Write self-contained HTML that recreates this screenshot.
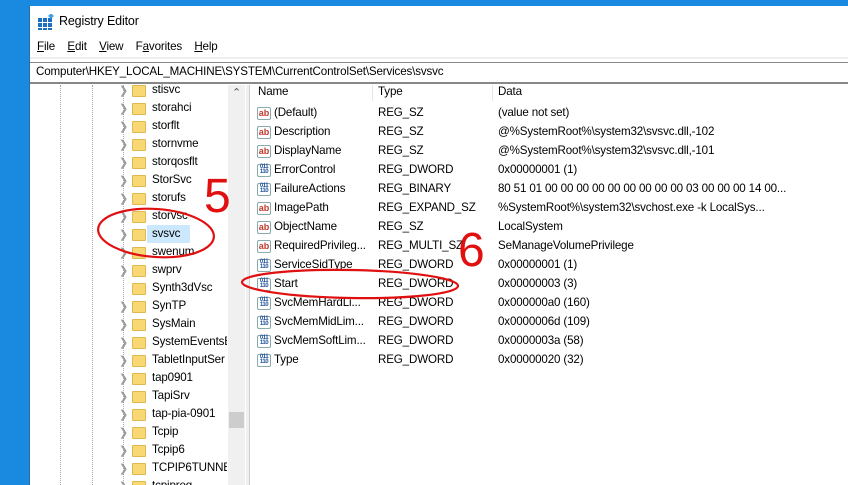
<!DOCTYPE html>
<html style="width:848px;height:485px;overflow:hidden"><head><style>
*{margin:0;padding:0;box-sizing:border-box}
body{width:848px;height:485px;overflow:hidden;background:#1a8ae0;font-family:"Liberation Sans",sans-serif;font-size:11.6px;letter-spacing:-0.15px;color:#000;position:relative}
.win{position:absolute;left:29px;top:6px;width:830px;height:479px;background:#fff;border-left:1px solid #2a6cb0;overflow:hidden}
.t{position:absolute;white-space:nowrap}
.fold{position:absolute;width:14px;height:12px;background:#f8d775;border:1px solid #e0b850;border-radius:1px}
.chev{position:absolute;color:#999;font-size:11px}
.ico{position:absolute;width:14px;height:13px;border:1px solid #8aa;border-radius:2px;font-size:9px;font-weight:bold;line-height:11px;text-align:center;letter-spacing:0}
.ab{color:#c0392b;background:#fff}
.bin{color:#1d4f9a;font-size:6px;line-height:5px;letter-spacing:-0.5px}
</style></head><body>
<div class="win">
 <svg style="position:absolute;left:8px;top:8px" width="16" height="16"><g fill="#1e6fc0"><rect x="0" y="4" width="4" height="4"/><rect x="5" y="4" width="4" height="4"/><rect x="0" y="9" width="4" height="4"/><rect x="5" y="9" width="4" height="4"/><rect x="10" y="9" width="4" height="4"/><rect x="0" y="14" width="4" height="2"/><rect x="5" y="14" width="4" height="2"/><rect x="10" y="14" width="4" height="2"/><rect x="10" y="4" width="4" height="4"/></g><rect x="11" y="0" width="4" height="4" fill="#3aa0e8" transform="rotate(45 13 2)"/></svg>
 <div class="t" style="left:29px;top:8px;font-size:12.5px">Registry Editor</div>
 <div class="t" style="left:7px;top:34px"><u>F</u>ile&nbsp;&nbsp;&nbsp; <u>E</u>dit&nbsp;&nbsp;&nbsp; <u>V</u>iew&nbsp;&nbsp;&nbsp; F<u>a</u>vorites&nbsp;&nbsp;&nbsp; <u>H</u>elp</div>
 <div style="position:absolute;left:0;top:51px;width:830px;height:2px;background:#f0f0f0"></div>
 <div style="position:absolute;left:0;top:56px;width:830px;height:22px;border-top:1px solid #888;border-bottom:2px solid #888;background:#fff"></div>
 <div class="t" style="left:6px;top:59px">Computer\HKEY_LOCAL_MACHINE\SYSTEM\CurrentControlSet\Services\svsvc</div>
 <div style="position:absolute;left:30px;top:79px;height:420px;border-left:1px dotted #aaa"></div>
 <div style="position:absolute;left:62px;top:79px;height:420px;border-left:1px dotted #aaa"></div>
 <div style="position:absolute;left:93px;top:79px;height:420px;border-left:1px dotted #aaa"></div>
 <div style="position:absolute;left:198px;top:79px;width:17px;height:410px;background:#f0f0f0"></div>
 <div class="t" style="left:202px;top:80px;color:#555;font-size:11px">&#8963;</div>
 <div style="position:absolute;left:199px;top:406px;width:15px;height:16px;background:#cdcdcd"></div>
 <div style="position:absolute;left:216px;top:79px;width:4px;height:410px;background:#f0f0f0;border-right:1px solid #ccc"></div>
 <div style="position:absolute;left:117px;top:219px;width:43px;height:18px;background:#cce8ff"></div>
 <div id="tree"></div>
 <div class="t" style="left:228px;top:79px">Name</div>
 <div class="t" style="left:348px;top:79px">Type</div>
 <div class="t" style="left:468px;top:79px">Data</div>
 <div style="position:absolute;left:342px;top:79px;height:16px;border-left:1px solid #e5e5e5"></div>
 <div style="position:absolute;left:462px;top:79px;height:16px;border-left:1px solid #e5e5e5"></div>
 <div id="list"></div>
</div>
<svg style="position:absolute;left:0;top:0" width="848" height="485">
 <ellipse cx="156" cy="233" rx="58" ry="24" fill="none" stroke="#e01010" stroke-width="2.2" transform="rotate(4 156 233)"/>
 <ellipse cx="350" cy="284" rx="108" ry="14" fill="none" stroke="#e01010" stroke-width="2.2" transform="rotate(1 350 284)"/>
 <text x="204" y="212" font-family="Liberation Sans" font-size="48" fill="#e01010">5</text>
 <text x="458" y="266" font-family="Liberation Sans" font-size="48" fill="#e01010">6</text>
</svg>
<script>
var tn=["stisvc","storahci","storflt","stornvme","storqosflt","StorSvc","storufs","storvsc","svsvc","swenum","swprv","Synth3dVsc","SynTP","SysMain","SystemEventsB","TabletInputSer","tap0901","TapiSrv","tap-pia-0901","Tcpip","Tcpip6","TCPIP6TUNNE","tcpipreg"];
var h="";
tn.forEach(function(n,i){var y=75+i*18;
 if(i!=11)h+='<div class="chev" style="left:89px;top:'+(y+3)+'px">&#x276F;</div>';
 h+='<div class="fold" style="left:102px;top:'+(y+4)+'px"></div><div class="t" style="left:122px;top:'+(y+2)+'px;width:75px;overflow:hidden">'+n+'</div>';});
document.getElementById("tree").innerHTML=h;
var L=[["ab","(Default)","REG_SZ","(value not set)"],["ab","Description","REG_SZ","@%SystemRoot%\\system32\\svsvc.dll,-102"],["ab","DisplayName","REG_SZ","@%SystemRoot%\\system32\\svsvc.dll,-101"],["b","ErrorControl","REG_DWORD","0x00000001 (1)"],["b","FailureActions","REG_BINARY","80 51 01 00 00 00 00 00 00 00 00 00 03 00 00 00 14 00..."],["ab","ImagePath","REG_EXPAND_SZ","%SystemRoot%\\system32\\svchost.exe -k LocalSys..."],["ab","ObjectName","REG_SZ","LocalSystem"],["ab","RequiredPrivileg...","REG_MULTI_SZ","SeManageVolumePrivilege"],["b","ServiceSidType","REG_DWORD","0x00000001 (1)"],["b","Start","REG_DWORD","0x00000003 (3)"],["b","SvcMemHardLi...","REG_DWORD","0x000000a0 (160)"],["b","SvcMemMidLim...","REG_DWORD","0x0000006d (109)"],["b","SvcMemSoftLim...","REG_DWORD","0x0000003a (58)"],["b","Type","REG_DWORD","0x00000020 (32)"]];
h="";
L.forEach(function(r,i){var y=100+i*19;
 h+=(r[0]=="ab"?'<div class="ico ab" style="left:227px;top:'+(y+1)+'px">ab</div>':'<div class="ico bin" style="left:227px;top:'+(y+1)+'px">011<br>110</div>');
 h+='<div class="t" style="left:244px;top:'+y+'px">'+r[1]+'</div><div class="t" style="left:348px;top:'+y+'px">'+r[2]+'</div><div class="t" style="left:468px;top:'+y+'px">'+r[3]+'</div>';});
document.getElementById("list").innerHTML=h;
</script>
</body></html>
